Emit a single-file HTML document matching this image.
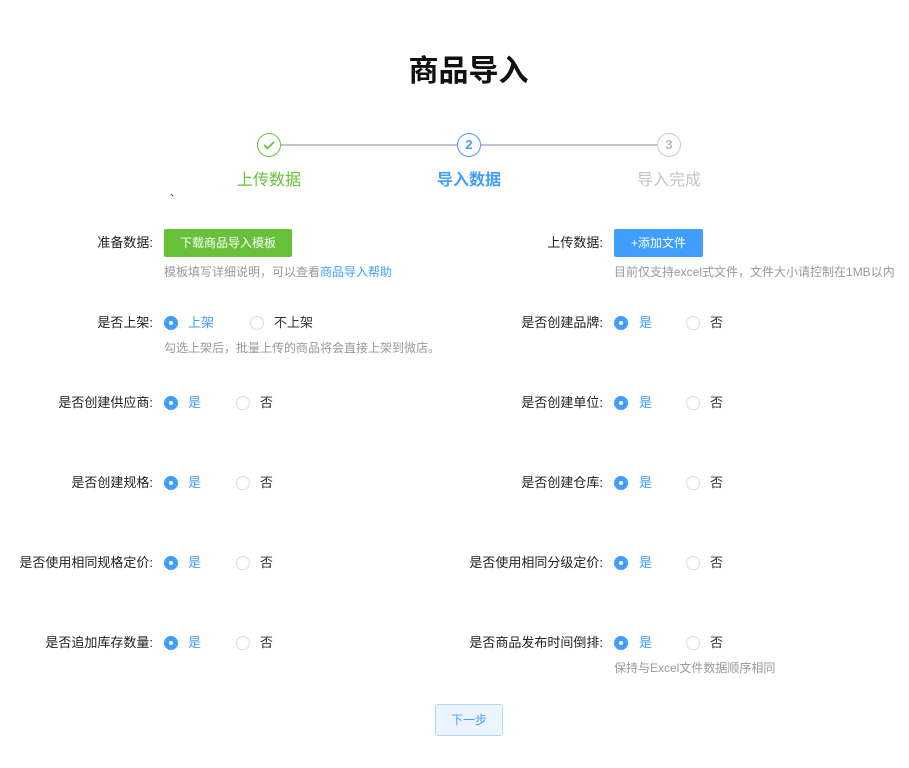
<!DOCTYPE html><html><head><meta charset="utf-8"><style>
body{margin:0;width:909px;height:768px;background:#fff;font-family:"Liberation Sans","Noto Sans CJK SC",sans-serif;font-size:13px;color:#333;position:relative;overflow:hidden}
.a{position:absolute;white-space:nowrap}
.lbl{position:absolute;text-align:right;width:200px;line-height:16px;color:#222}
.r{position:absolute;width:12px;height:12px;border:1px solid #ddd;border-radius:50%;background:#fff}
.r.on{background:#409eff;border-color:#409eff}
.r.on:after{content:"";position:absolute;left:4px;top:4px;width:4px;height:4px;border-radius:50%;background:#fff}
.t{position:absolute;line-height:16px;font-size:13px}
.hint{position:absolute;font-size:12px;color:#999;line-height:14px;white-space:nowrap}
.c{position:absolute;width:22px;height:22px;border-radius:50%;background:#fff;text-align:center;line-height:22px;font-weight:bold;font-size:13px}
</style></head><body>
<div class="a" style="left:0;width:937px;text-align:center;top:46px;font-size:30px;font-weight:bold;color:#111">商品导入</div>
<div class="a" style="left:281px;top:144px;width:376px;height:2px;background:#c0c4d0"></div>
<div class="c" style="left:257px;top:133px;border:1px solid #67c23a;color:#67c23a"><svg width="14" height="14" viewBox="0 0 14 14" style="margin-top:4px"><path d="M2 7l3.5 3.5L12 4" fill="none" stroke="#67c23a" stroke-width="1.8"/></svg></div>
<div class="c" style="left:457px;top:133px;border:1px solid #409eff;color:#409eff">2</div>
<div class="c" style="left:657px;top:133px;border:1px solid #ccc;color:#bbb">3</div>
<div class="a" style="left:237px;top:166px;font-size:16px;color:#67c23a">上传数据</div>
<div class="a" style="left:437px;top:166px;font-size:16px;color:#409eff;font-weight:bold">导入数据</div>
<div class="a" style="left:637px;top:166px;font-size:16px;color:#c0c4cc">导入完成</div>
<div class="a" style="left:170px;top:184px;font-size:10px">、</div>

<div class="lbl" style="left:-47px;top:235px">准备数据:</div>
<div class="a" style="left:164px;top:229px;width:128px;height:28px;background:#67c23a;border-radius:2px;color:#fff;text-align:center;line-height:28px;font-size:12px">下载商品导入模板</div>
<div class="hint" style="left:164px;top:265px">模板填写详细说明，可以查看<span style="color:#409eff">商品导入帮助</span></div>
<div class="lbl" style="left:403px;top:235px">上传数据:</div>
<div class="a" style="left:614px;top:229px;width:89px;height:28px;background:#409eff;border-radius:2px;color:#fff;text-align:center;line-height:28px;font-size:12px">+添加文件</div>
<div class="hint" style="left:614px;top:265px">目前仅支持excel式文件，文件大小请控制在1MB以内</div>

<div class="lbl" style="left:-47px;top:315px">是否上架:</div>
<div class="r on" style="left:164px;top:316px"></div><div class="t" style="left:188px;top:315px;color:#409eff">上架</div>
<div class="r" style="left:250px;top:316px"></div><div class="t" style="left:274px;top:315px">不上架</div>
<div class="hint" style="left:164px;top:341px">勾选上架后，批量上传的商品将会直接上架到微店。</div>
<div class="lbl" style="left:403px;top:315px">是否创建品牌:</div>
<div class="r on" style="left:614px;top:316px"></div><div class="t" style="left:639px;top:315px;color:#409eff">是</div>
<div class="r" style="left:686px;top:316px"></div><div class="t" style="left:710px;top:315px">否</div>

<div class="lbl" style="left:-47px;top:395px">是否创建供应商:</div>
<div class="r on" style="left:164px;top:396px"></div><div class="t" style="left:188px;top:395px;color:#409eff">是</div>
<div class="r" style="left:236px;top:396px"></div><div class="t" style="left:260px;top:395px">否</div>
<div class="lbl" style="left:403px;top:395px">是否创建单位:</div>
<div class="r on" style="left:614px;top:396px"></div><div class="t" style="left:639px;top:395px;color:#409eff">是</div>
<div class="r" style="left:686px;top:396px"></div><div class="t" style="left:710px;top:395px">否</div>

<div class="lbl" style="left:-47px;top:475px">是否创建规格:</div>
<div class="r on" style="left:164px;top:476px"></div><div class="t" style="left:188px;top:475px;color:#409eff">是</div>
<div class="r" style="left:236px;top:476px"></div><div class="t" style="left:260px;top:475px">否</div>
<div class="lbl" style="left:403px;top:475px">是否创建仓库:</div>
<div class="r on" style="left:614px;top:476px"></div><div class="t" style="left:639px;top:475px;color:#409eff">是</div>
<div class="r" style="left:686px;top:476px"></div><div class="t" style="left:710px;top:475px">否</div>

<div class="lbl" style="left:-47px;top:555px">是否使用相同规格定价:</div>
<div class="r on" style="left:164px;top:556px"></div><div class="t" style="left:188px;top:555px;color:#409eff">是</div>
<div class="r" style="left:236px;top:556px"></div><div class="t" style="left:260px;top:555px">否</div>
<div class="lbl" style="left:403px;top:555px">是否使用相同分级定价:</div>
<div class="r on" style="left:614px;top:556px"></div><div class="t" style="left:639px;top:555px;color:#409eff">是</div>
<div class="r" style="left:686px;top:556px"></div><div class="t" style="left:710px;top:555px">否</div>

<div class="lbl" style="left:-47px;top:635px">是否追加库存数量:</div>
<div class="r on" style="left:164px;top:636px"></div><div class="t" style="left:188px;top:635px;color:#409eff">是</div>
<div class="r" style="left:236px;top:636px"></div><div class="t" style="left:260px;top:635px">否</div>
<div class="lbl" style="left:403px;top:635px">是否商品发布时间倒排:</div>
<div class="r on" style="left:614px;top:636px"></div><div class="t" style="left:639px;top:635px;color:#409eff">是</div>
<div class="r" style="left:686px;top:636px"></div><div class="t" style="left:710px;top:635px">否</div>
<div class="hint" style="left:614px;top:661px">保持与Excel文件数据顺序相同</div>

<div class="a" style="left:435px;top:704px;width:66px;height:30px;background:#ecf5ff;border:1px solid #b3d8ff;border-radius:3px;color:#409eff;text-align:center;line-height:30px;font-size:12px">下一步</div>
</body></html>
